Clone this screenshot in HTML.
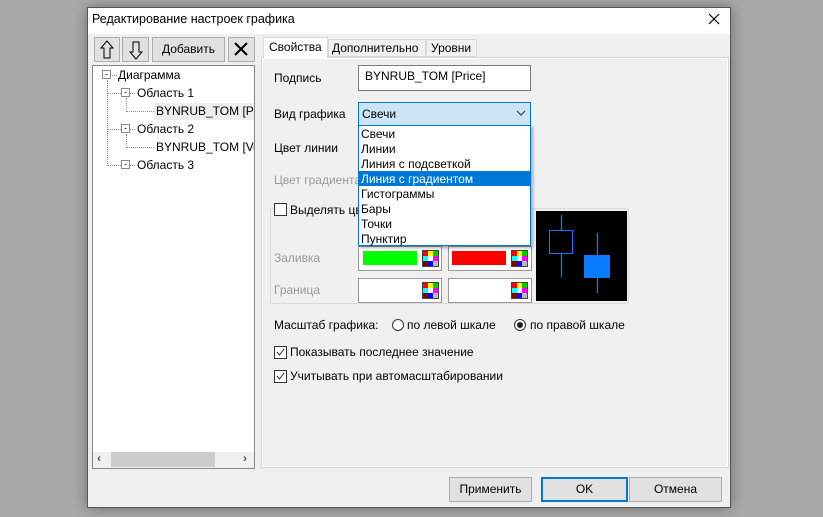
<!DOCTYPE html>
<html><head><meta charset="utf-8"><style>
*{box-sizing:border-box;margin:0;padding:0}
body{width:823px;height:517px;background:#a9a9a9;position:relative;overflow:hidden;font-family:"Liberation Sans","Noto Sans CJK SC",sans-serif;font-size:12px;color:#000}
.a{position:absolute}
.dlg{left:87px;top:7px;width:644px;height:501px;background:#efefef;border:1px solid #555;box-shadow:0 0 14px rgba(0,0,0,.35)}
.btn{position:absolute;background:#e1e1e1;border:1px solid #adadad;text-align:center}
.lbl{position:absolute;white-space:nowrap}
.box{position:absolute;background:#fff;border:1px solid #7a7a7a}
.pal{position:absolute;width:17px;height:17px;display:grid;grid-template-columns:repeat(3,5px);grid-template-rows:repeat(3,5px);gap:0;background:#444;padding:1px}
.pal i{display:block}
.cb{position:absolute;width:13px;height:13px;border:1px solid #333;background:#fff}
</style></head><body>
<div class="a dlg"></div>
<div class="a" style="left:88px;top:8px;width:642px;height:26px;background:#fff"></div>
<div class="lbl" style="left:92px;top:12px;font-size:12.5px">Редактирование настроек графика</div>
<svg class="a" style="left:708px;top:13px" width="12" height="12"><path d="M1 1L11 11M11 1L1 11" stroke="#000" stroke-width="1.2"/></svg>

<div class="btn" style="left:94px;top:37px;width:26px;height:25px"></div>
<svg class="a" style="left:99px;top:40px" width="16" height="20"><path d="M8 1L2 8H5V18H11V8H14Z" fill="none" stroke="#000"/></svg>
<div class="btn" style="left:122px;top:37px;width:27px;height:25px"></div>
<svg class="a" style="left:128px;top:40px" width="16" height="20"><path d="M8 19L2 12H5V2H11V12H14Z" fill="none" stroke="#000"/></svg>
<div class="btn" style="left:152px;top:37px;width:73px;height:25px;line-height:23px;font-size:12px">Добавить</div>
<div class="btn" style="left:228px;top:37px;width:27px;height:25px"></div>
<svg class="a" style="left:234px;top:42px" width="14" height="14"><path d="M1 1L13 13M13 1L1 13" stroke="#000" stroke-width="2"/></svg>

<div class="a" style="left:92px;top:65px;width:163px;height:404px;background:#fff;border:1px solid #828790"></div>
<div class="a" style="left:107px;top:80px;height:86px;border-left:1px dotted #888"></div>
<div class="a" style="left:107px;top:75px;width:10px;border-top:1px dotted #888"></div>
<div class="a" style="left:107px;top:93px;width:28px;border-top:1px dotted #888"></div>
<div class="a" style="left:107px;top:129px;width:28px;border-top:1px dotted #888"></div>
<div class="a" style="left:107px;top:165px;width:28px;border-top:1px dotted #888"></div>
<div class="a" style="left:126px;top:98px;height:14px;border-left:1px dotted #888"></div>
<div class="a" style="left:126px;top:134px;height:14px;border-left:1px dotted #888"></div>
<div class="a" style="left:126px;top:111px;width:28px;border-top:1px dotted #888"></div>
<div class="a" style="left:126px;top:147px;width:28px;border-top:1px dotted #888"></div>
<div class="lbl" style="left:102px;top:70px;width:9px;height:9px;border:1px solid #888;background:#fff;font-size:9px;line-height:6px;text-align:center">-</div>
<div class="lbl" style="left:118px;top:68px">Диаграмма</div>
<div class="lbl" style="left:121px;top:88px;width:9px;height:9px;border:1px solid #888;background:#fff;font-size:9px;line-height:6px;text-align:center">-</div>
<div class="lbl" style="left:137px;top:86px">Область 1</div>
<div class="a" style="left:154px;top:103px;width:100px;height:17px;background:#eee"></div>
<div class="lbl" style="left:156px;top:104px;overflow:hidden;width:98px">BYNRUB_TOM [Price]</div>
<div class="lbl" style="left:121px;top:124px;width:9px;height:9px;border:1px solid #888;background:#fff;font-size:9px;line-height:6px;text-align:center">-</div>
<div class="lbl" style="left:137px;top:122px">Область 2</div>
<div class="lbl" style="left:156px;top:140px;overflow:hidden;width:98px">BYNRUB_TOM [Volume]</div>
<div class="lbl" style="left:121px;top:160px;width:9px;height:9px;border:1px solid #888;background:#fff;font-size:9px;line-height:6px;text-align:center">-</div>
<div class="lbl" style="left:137px;top:158px">Область 3</div>
<div class="a" style="left:93px;top:452px;width:161px;height:16px;background:#f0f0f0"></div>
<div class="a" style="left:111px;top:452px;width:104px;height:15px;background:#cdcdcd"></div>
<div class="lbl" style="left:97px;top:451px;color:#555;font-weight:bold">‹</div>
<div class="lbl" style="left:243px;top:451px;color:#555;font-weight:bold">›</div>

<div class="a" style="left:261px;top:57px;width:468px;height:411px;background:#f0f0f0;border:1px solid #d9d9d9;box-shadow:inset 0 0 0 1px #fff"></div>
<div class="a" style="left:263px;top:37px;width:65px;height:21px;background:#fff;border:1px solid #d9d9d9;border-bottom:none"></div>
<div class="lbl" style="left:269px;top:40px">Свойства</div>
<div class="a" style="left:328px;top:39px;width:98px;height:18px;background:#f0f0f0;border:1px solid #d9d9d9"></div>
<div class="lbl" style="left:332px;top:41px">Дополнительно</div>
<div class="a" style="left:426px;top:39px;width:51px;height:18px;background:#f0f0f0;border:1px solid #d9d9d9"></div>
<div class="lbl" style="left:431px;top:41px">Уровни</div>

<div class="lbl" style="left:274px;top:71px">Подпись</div>
<div class="box" style="left:358px;top:65px;width:173px;height:26px"></div>
<div class="lbl" style="left:365px;top:69px">BYNRUB_TOM [Price]</div>
<div class="lbl" style="left:274px;top:107px">Вид графика</div>
<div class="a" style="left:358px;top:102px;width:173px;height:24px;background:#cce4f7;border:1px solid #0078d7"></div>
<div class="lbl" style="left:362px;top:107px">Свечи</div>
<svg class="a" style="left:516px;top:110px" width="10" height="6"><path d="M1 1L5 5L9 1" fill="none" stroke="#333"/></svg>
<div class="lbl" style="left:274px;top:141px">Цвет линии</div>
<div class="lbl" style="left:274px;top:173px;color:#9a9a9a">Цвет градиента</div>
<div class="a" style="left:270px;top:208px;width:359px;height:96px;border:1px solid #ddd"></div>
<div class="cb" style="left:274px;top:203px"></div>
<div class="lbl" style="left:290px;top:203px;background:#f0f0f0">Выделять цвет</div>
<div class="a" style="left:536px;top:211px;width:91px;height:90px;background:#000"></div>
<svg class="a" style="left:536px;top:211px" width="91" height="90"><path d="M25.5 4V19M25.5 42V66M61.5 22V44M61.5 67V82" stroke="#0a7bff" stroke-width="1.3"/><rect x="13.5" y="19.5" width="23" height="23" fill="none" stroke="#0a7bff"/><rect x="48" y="44" width="26" height="23" fill="#0a7bff"/></svg>
<div class="lbl" style="left:274px;top:251px;color:#9a9a9a">Заливка</div>
<div class="lbl" style="left:274px;top:283px;color:#9a9a9a">Граница</div>
<div class="box" style="left:358px;top:246px;width:84px;height:25px;border-color:#999"></div>
<div class="a" style="left:363px;top:251px;width:54px;height:14px;background:#0f0"></div>
<div class="box" style="left:448px;top:246px;width:84px;height:25px;border-color:#999"></div>
<div class="a" style="left:452px;top:251px;width:54px;height:14px;background:#f00"></div>
<div class="box" style="left:358px;top:278px;width:84px;height:25px;border-color:#999"></div>
<div class="box" style="left:448px;top:278px;width:84px;height:25px;border-color:#999"></div>
<div class="pal" style="left:422px;top:250px"><i style="background:#f00"></i><i style="background:#ff0"></i><i style="background:#0c0"></i><i style="background:#0ff"></i><i style="background:#fff"></i><i style="background:#f0f"></i><i style="background:#800"></i><i style="background:#00f"></i><i style="background:#bbb"></i></div>
<div class="pal" style="left:511px;top:250px"><i style="background:#f00"></i><i style="background:#ff0"></i><i style="background:#0c0"></i><i style="background:#0ff"></i><i style="background:#fff"></i><i style="background:#f0f"></i><i style="background:#800"></i><i style="background:#00f"></i><i style="background:#bbb"></i></div>
<div class="pal" style="left:422px;top:282px"><i style="background:#f00"></i><i style="background:#ff0"></i><i style="background:#0c0"></i><i style="background:#0ff"></i><i style="background:#fff"></i><i style="background:#f0f"></i><i style="background:#800"></i><i style="background:#00f"></i><i style="background:#bbb"></i></div>
<div class="pal" style="left:511px;top:282px"><i style="background:#f00"></i><i style="background:#ff0"></i><i style="background:#0c0"></i><i style="background:#0ff"></i><i style="background:#fff"></i><i style="background:#f0f"></i><i style="background:#800"></i><i style="background:#00f"></i><i style="background:#bbb"></i></div>

<div class="a" style="left:358px;top:125px;width:173px;height:121px;background:#fff;border:1px solid #0078d7;box-shadow:2px 2px 3px rgba(0,0,0,.3)"></div>
<div class="lbl" style="left:361px;top:127px">Свечи</div>
<div class="lbl" style="left:361px;top:142px">Линии</div>
<div class="lbl" style="left:361px;top:157px">Линия с подсветкой</div>
<div class="a" style="left:359px;top:171px;width:171px;height:15px;background:#0078d7"></div>
<div class="lbl" style="left:361px;top:172px;color:#fff">Линия с градиентом</div>
<div class="lbl" style="left:361px;top:187px">Гистограммы</div>
<div class="lbl" style="left:361px;top:202px">Бары</div>
<div class="lbl" style="left:361px;top:217px">Точки</div>
<div class="lbl" style="left:361px;top:232px">Пунктир</div>

<div class="lbl" style="left:274px;top:318px">Масштаб графика:</div>
<div class="a" style="left:392px;top:319px;width:12px;height:12px;border:1px solid #333;border-radius:50%;background:#fff"></div>
<div class="lbl" style="left:407px;top:318px">по левой шкале</div>
<div class="a" style="left:514px;top:319px;width:12px;height:12px;border:1px solid #333;border-radius:50%;background:#fff"></div>
<div class="a" style="left:517px;top:322px;width:6px;height:6px;border-radius:50%;background:#222"></div>
<div class="lbl" style="left:530px;top:318px">по правой шкале</div>
<div class="cb" style="left:274px;top:346px"></div>
<svg class="a" style="left:275px;top:347px" width="11" height="11"><path d="M2 5L4.5 8L9 2" fill="none" stroke="#222"/></svg>
<div class="lbl" style="left:290px;top:345px">Показывать последнее значение</div>
<div class="cb" style="left:274px;top:370px"></div>
<svg class="a" style="left:275px;top:371px" width="11" height="11"><path d="M2 5L4.5 8L9 2" fill="none" stroke="#222"/></svg>
<div class="lbl" style="left:290px;top:369px">Учитывать при автомасштабировании</div>

<div class="btn" style="left:449px;top:477px;width:83px;height:25px;line-height:23px">Применить</div>
<div class="btn" style="left:541px;top:477px;width:87px;height:25px;line-height:21px;border:2px solid #0078d7">OK</div>
<div class="btn" style="left:629px;top:477px;width:93px;height:25px;line-height:23px">Отмена</div>
</body></html>
